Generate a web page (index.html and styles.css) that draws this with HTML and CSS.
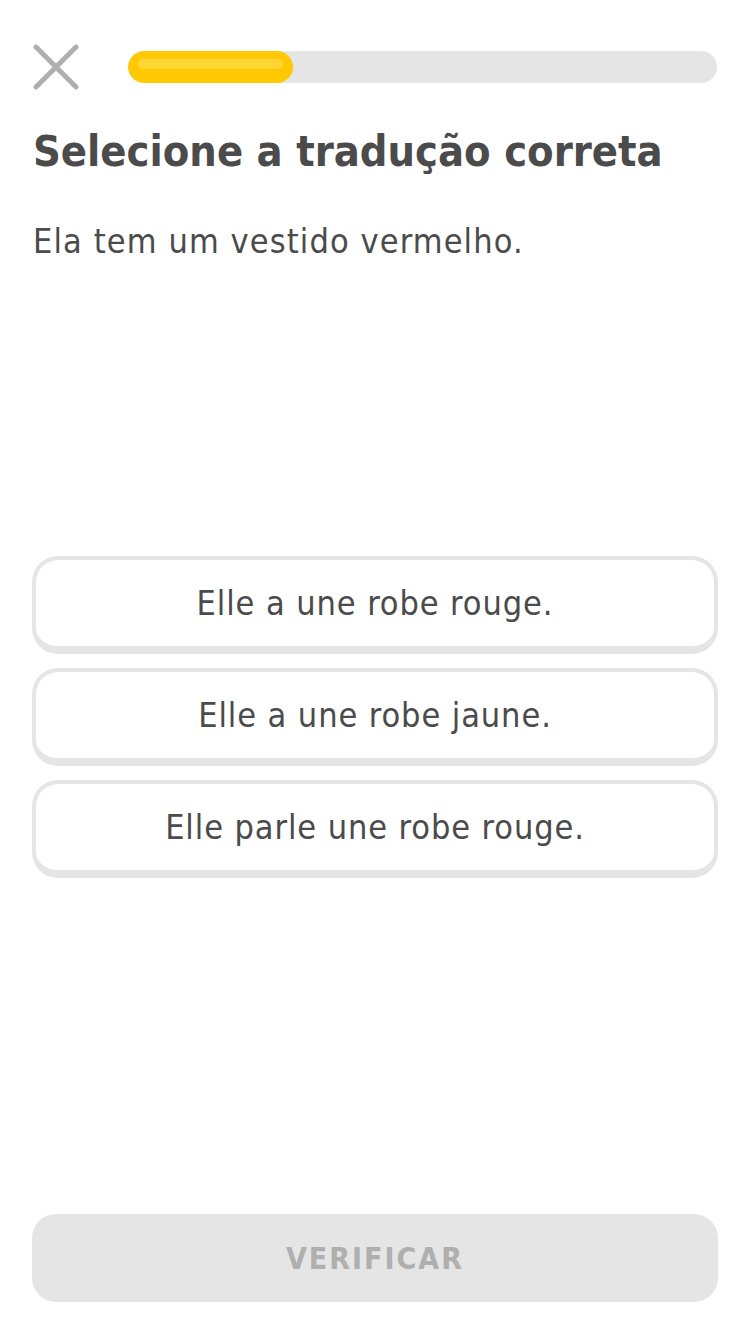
FILE: index.html
```html
<!DOCTYPE html>
<html lang="pt">
<head>
<meta charset="utf-8">
<link rel="stylesheet" href="styles.css">
</head>
<body>
<div class="screen">
  <header class="top">
    <button class="close" aria-label="Fechar">
      <svg width="46" height="46" viewBox="0 0 46 46"><path d="M3 3 L43 43 M43 3 L3 43" stroke="#afafaf" stroke-width="5" stroke-linecap="round" fill="none"/></svg>
    </button>
    <div class="progress">
      <div class="progress-fill" style="width:165px"><span class="shine"></span></div>
    </div>
  </header>
  <h1 class="title">Selecione a tradução correta</h1>
  <p class="prompt">Ela tem um vestido vermelho.</p>
  <div class="options">
    <button class="option">Elle a une robe rouge.</button>
    <button class="option">Elle a une robe jaune.</button>
    <button class="option">Elle parle une robe rouge.</button>
  </div>
  <div class="footer">
    <button class="check">VERIFICAR</button>
  </div>
</div>
</body>
</html>
```
FILE: styles.css
```css
html, body {
  margin: 0;
  padding: 0;
  background: #fff;
}
body {
  font-family: "DejaVu Sans Condensed", "DejaVu Sans", sans-serif;
  color: #4b4b4b;
}
.screen {
  width: 750px;
  height: 1334px;
  box-sizing: border-box;
  padding: 0 32px 32px;
  display: flex;
  flex-direction: column;
}
.top {
  display: flex;
  align-items: center;
  gap: 49px;
  margin-top: 44px;
  height: 46px;
}
.close {
  border: 0;
  background: none;
  padding: 0;
  margin-left: 1px;
  width: 46px;
  height: 46px;
  display: flex;
}
.progress {
  flex: 1;
  height: 32px;
  border-radius: 16px;
  background: #e5e5e5;
  margin-right: 1px;
  overflow: hidden;
}
.progress-fill {
  height: 32px;
  border-radius: 16px;
  background: #ffc800;
  box-sizing: border-box;
  padding: 8px 10px 0;
}
.shine {
  display: block;
  height: 10px;
  border-radius: 5px;
  background: #ffd633;
}
.title {
  margin: 33px 0 0 1px;
  font-size: 43px;
  line-height: 56px;
  font-weight: bold;
  color: #4b4b4b;
}
.prompt {
  margin: 40px 0 0 1px;
  font-size: 34px;
  line-height: 44px;
  letter-spacing: 1.1px;
}
.options {
  margin-top: 293px;
  display: flex;
  flex-direction: column;
  gap: 14px;
}
.option {
  font-family: inherit;
  height: 98px;
  box-sizing: border-box;
  border: 4px solid #e5e5e5;
  border-bottom-width: 8px;
  border-radius: 26px;
  background: #fff;
  color: #4b4b4b;
  font-size: 34px;
  letter-spacing: 0.9px;
  padding: 0;
  text-align: center;
}
.footer {
  margin-top: auto;
}
.check {
  width: 100%;
  height: 88px;
  border: 0;
  border-radius: 24px;
  background: #e5e5e5;
  color: #afafaf;
  font-family: inherit;
  font-weight: bold;
  font-size: 30px;
  letter-spacing: 2px;
}
```
